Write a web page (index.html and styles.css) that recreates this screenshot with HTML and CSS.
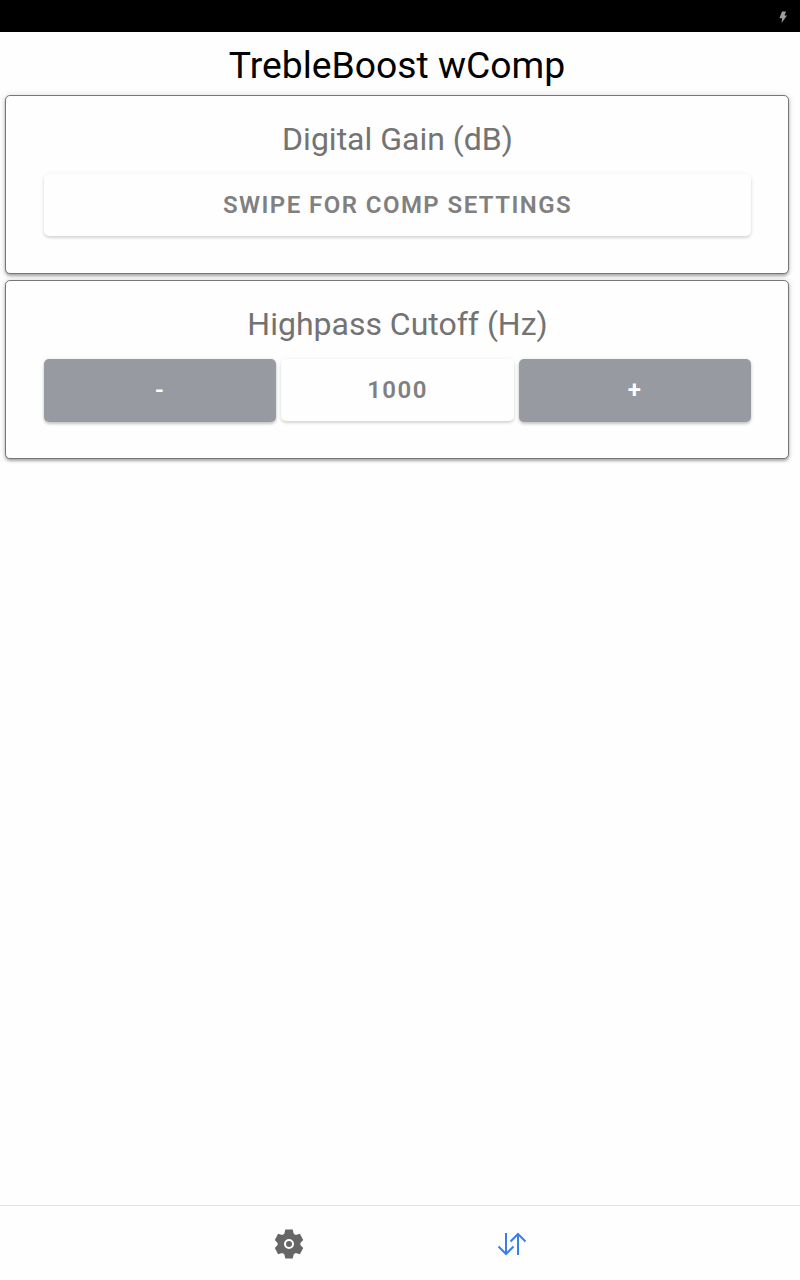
FILE: index.html
```html
<!DOCTYPE html>
<html lang="en">
<head>
<meta charset="utf-8">
<title>TrebleBoost wComp</title>
<link rel="stylesheet" href="styles.css">
</head>
<body>
<div class="app">
  <header class="status"><svg class="bolt" viewBox="0 0 8 12"><path d="M3 .5h4L5.500 4.500H8L2.500 12 3.200 7.200H.5z"/></svg></header>
  <main class="content">
    <h1 class="title">TrebleBoost wComp</h1>
    <section class="card">
      <h2 class="label">Digital Gain (dB)</h2>
      <div class="row"><button class="btn plain">SWIPE FOR COMP SETTINGS</button></div>
    </section>
    <section class="card">
      <h2 class="label">Highpass Cutoff (Hz)</h2>
      <div class="row">
        <button class="btn step">-</button>
        <button class="btn plain">1000</button>
        <button class="btn step">+</button>
      </div>
    </section>
  </main>
  <nav class="tabs">
    <svg class="tab" viewBox="0 0 32 32"><path class="gear" fill-rule="evenodd" d="M12.300 1.600h7.400l1 4.200 2 1.200 4.200-1.200 3.300 6.200-2.800 3v2l2.800 3-3.300 6.200-4.200-1.200-2 1.200-1 4.200h-7.400l-1-4.200-2-1.200-4.200 1.200L1.800 20l2.800-3v-2l-2.800-3 3.300-6.200L9.300 7l2-1.200zM16 11a5 5 0 1 0 0 10 5 5 0 1 0 0-10z"/><circle class="gear" cx="16" cy="16" r="3"/></svg>
    <svg class="tab" viewBox="0 0 32 32"><path class="arrows" d="M10 5v21M2.500 18.500l7.500 7.500 7.500-7.500M22 27V6M14.500 13.500L22 6l7.500 7.500"/></svg>
  </nav>
</div>
</body>
</html>
```
FILE: styles.css
```css
* { box-sizing: border-box; }
body { margin: 0; font-family: Roboto, sans-serif; background: #fefefe; }
.app { height: 1280px; display: flex; flex-direction: column; }
.status { height: 32px; background: #000; display: flex; justify-content: flex-end; align-items: center; padding: 1px 13px 0 0; }
.bolt { width: 8px; height: 12px; fill: #a0a0a0; }
.content { flex: 1; padding: 12px 11px 0 5px; }
.title { margin: 0 0 8px; height: 43px; line-height: 43px; font-size: 37.3px; font-weight: 400; text-align: center; color: #000; }
.card { height: 179px; margin-bottom: 6px; padding: 22px 37px 0 38px; border: 1px solid #777; border-radius: 5px; background: #fefefe; box-shadow: 0 2px 3px rgba(0,0,0,.3), 0 0 6px rgba(0,0,0,.12); }
.label { margin: 0 0 14px; height: 42px; line-height: 42px; font-size: 32px; font-weight: 400; text-align: center; color: #737373; }
.row { display: flex; gap: 5.4px; }
.btn { flex: 1; height: 63px; padding: 0 0 2px; border: 0; border-radius: 5px; font: 600 24px Roboto, sans-serif; letter-spacing: 1.440px; box-shadow: 0 2px 3px rgba(0,0,0,.2), 0 0 5px rgba(0,0,0,.07); }
.plain { height: 62.4px; padding-bottom: 0; background: #fefefe; color: #808080; box-shadow: 0 2px 3px rgba(0,0,0,.14), 0 0 5px rgba(0,0,0,.05); }
.step { background: #989aa2; color: #fff; }
.tabs { height: 75px; padding-top: 2px; border-top: 1px solid #e5e5e5; display: flex; justify-content: center; gap: 191px; align-items: center; }
.tab { width: 32px; height: 32px; }
.gear { fill: #666; }
.arrows { fill: none; stroke: #3880e8; stroke-width: 2; }
```
